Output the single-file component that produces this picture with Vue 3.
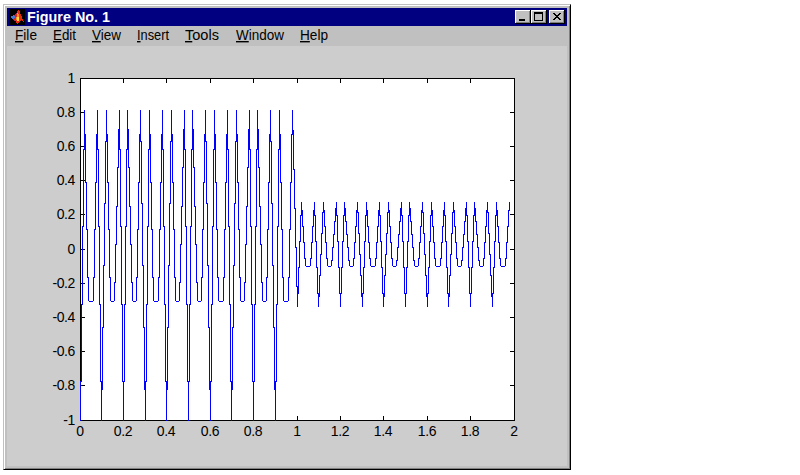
<script setup>
import { ref, computed } from "vue";

const menus = ref([
  { name: "File", width: 22, gap: 16 },
  { name: "Edit", width: 23, gap: 16 },
  { name: "View", width: 29, gap: 16 },
  { name: "Insert", width: 32, gap: 16 },
  { name: "Tools", width: 34, gap: 17 },
  { name: "Window", width: 48, gap: 16 },
  { name: "Help", width: 28, gap: 0 },
]);

// plot area inside the canvas
const left = 73;
const top = 32;
const width = 434;
const height = 342;

const px = (x) => Math.floor(left + (x / 2) * width + 0.001);
const py = (y) => Math.floor(top + ((1 - y) / 2) * height + 0.001);

const ticks = Array.from({ length: 11 }, (_, i) => i);
const xTicks = ticks.map((i) => ({ pos: px(i / 5), label: String(i / 5) }));
const yTicks = ticks.map((i) => ({
  pos: py(1 - i / 5),
  label: String((5 - i) / 5),
}));

// five samples per period, the amplitude drops to a third after x = 1
const wave = [-1, 0.809, -0.309, -0.309, 0.809];

const points = computed(() =>
  Array.from({ length: 100 }, (_, i) => {
    const y = wave[i % 5] / (i < 50 ? 1 : 3);
    return [px(i / 50), py(y)];
  })
);

// one vertical run of pixels for each column that a segment crosses
const signal = computed(() => {
  let d = "";
  for (let i = 1; i < points.value.length; i++) {
    const [x0, y0] = points.value[i - 1];
    const [x1, y1] = points.value[i];
    if (y0 === y1) {
      d += `M${x0} ${y0}H${x1 + 1}v1H${x0}z`;
      continue;
    }
    const slope = (y1 - y0) / (x1 - x0);
    for (let x = x0; x <= x1; x++) {
      const a = x === x0 ? y0 : y0 + slope * (x - 0.5 - x0);
      const b = x === x1 ? y1 : y0 + slope * (x + 0.5 - x0);
      const from = Math.round(Math.min(a, b));
      const to = Math.round(Math.max(a, b)) + 1;
      d += `M${x} ${from}V${to}h1V${from}z`;
    }
  }
  return d;
});
</script>

<template>
  <main class="window">
    <header class="titlebar">
      <svg class="logo" width="16" height="16" viewBox="0 0 16 16" shape-rendering="crispEdges">
        <rect width="16" height="16" fill="#000" />
        <path d="M1 8l4-2 3 2-3 4-2-2z" fill="#4878d0" />
        <path d="M5 6l2-1 2-3 1 2-3 7-2 1-1-2 2-2z" fill="#903070" />
        <path d="M9 1h1l2 5 3 7-3-2-2 2-2 2-1-3-2-1 2-4z" fill="#e82810" />
        <path d="M9 2l1 5-1 6-2-2 1-5z" fill="#ff9020" />
        <path d="M8 8h2v4H8z" fill="#ffe040" />
      </svg>
      <svg class="title" width="86" height="18">
        <text x="0" y="14" textLength="83" lengthAdjust="spacingAndGlyphs">Figure No. 1</text>
      </svg>
      <span class="flex-1"></span>
      <button aria-label="Minimize">
        <svg width="16" height="14" shape-rendering="crispEdges">
          <path d="M4 9h6v2H4z" />
        </svg>
      </button>
      <button aria-label="Maximize">
        <svg width="16" height="14" shape-rendering="crispEdges">
          <path d="M3 2h9v9H3zM4 4v6h7V4z" fill-rule="evenodd" />
        </svg>
      </button>
      <button class="close" aria-label="Close">
        <svg width="16" height="14" shape-rendering="crispEdges">
          <path
            d="M4 3h2v1H4zM10 3h2v1h-2zM5 4h2v1H5zM9 4h2v1H9zM6 5h4v1H6zM7 6h2v1H7zM6 7h4v1H6zM5 8h2v1H5zM9 8h2v1H9zM4 9h2v1H4zM10 9h2v1h-2z"
          />
        </svg>
      </button>
    </header>

    <nav class="menubar">
      <svg
        v-for="menu in menus"
        :key="menu.name"
        :width="menu.width + menu.gap"
        height="20"
      >
        <text x="0" y="14" :textLength="menu.width" lengthAdjust="spacingAndGlyphs"><tspan class="key">{{ menu.name[0] }}</tspan>{{ menu.name.slice(1) }}</text>
      </svg>
    </nav>

    <svg class="figure" width="560" height="420">
      <rect :x="left" :y="top" :width="width" :height="height" fill="#fff" />
      <g class="axes">
        <rect :x="left + 0.5" :y="top + 0.5" :width="width" :height="height" />
        <path
          v-for="tick in xTicks"
          :key="'x' + tick.label"
          :d="`M${tick.pos + 0.5} ${top}v5M${tick.pos + 0.5} ${top + height + 1}v-5`"
        />
        <path
          v-for="tick in yTicks"
          :key="'y' + tick.label"
          :d="`M${left} ${tick.pos + 0.5}h5M${left + width + 1} ${tick.pos + 0.5}h-5`"
        />
      </g>
      <path :d="signal" fill="#00f" shape-rendering="crispEdges" />
      <g class="labels">
        <text
          v-for="tick in xTicks"
          :key="'lx' + tick.label"
          :x="tick.pos"
          :y="top + height + 16"
          text-anchor="middle"
        >{{ tick.label }}</text>
        <text
          v-for="tick in yTicks"
          :key="'ly' + tick.label"
          :x="left - 5"
          :y="tick.pos + 5"
          text-anchor="end"
        >{{ tick.label }}</text>
      </g>
    </svg>
  </main>
</template>

<style>
body {
  background-color: #fff;
}
</style>

<style scoped>
* {
  box-sizing: border-box;
}

.window {
  width: 568px;
  height: 466px;
  margin: 4px 0 0 3px;
  padding: 3px;
  border: 1px solid;
  border-color: #c0c0c0 #000 #000 #c0c0c0;
  box-shadow: inset 1px 1px #fff, inset -1px -1px #808080;
  background: #c0c0c0;
  font-family: "Liberation Sans", Arial, sans-serif;
  display: flex;
  flex-direction: column;
}

.titlebar {
  display: flex;
  align-items: center;
  height: 18px;
  padding: 0 2px;
  background: #000080;
}

.logo {
  margin-right: 2px;
}

.title {
  fill: #fff;
  font-size: 14px;
  font-weight: bold;
}

.flex-1 {
  flex: 1 1 0%;
}

button {
  width: 16px;
  height: 14px;
  padding: 0;
  border: none;
  background: #c0c0c0;
  box-shadow: inset -1px -1px #000, inset 1px 1px #fff, inset -2px -2px #808080;
}

button svg {
  display: block;
}

.close {
  margin-left: 2px;
}

.menubar {
  display: flex;
  height: 20px;
  padding-left: 8px;
  font-size: 14px;
}

.key {
  text-decoration: underline;
}

.figure {
  display: block;
  background: #cdcdcd;
}

.axes {
  fill: none;
  stroke: #000;
  shape-rendering: crispEdges;
}

.labels {
  font-size: 14px;
  letter-spacing: -0.4px;
}
</style>
